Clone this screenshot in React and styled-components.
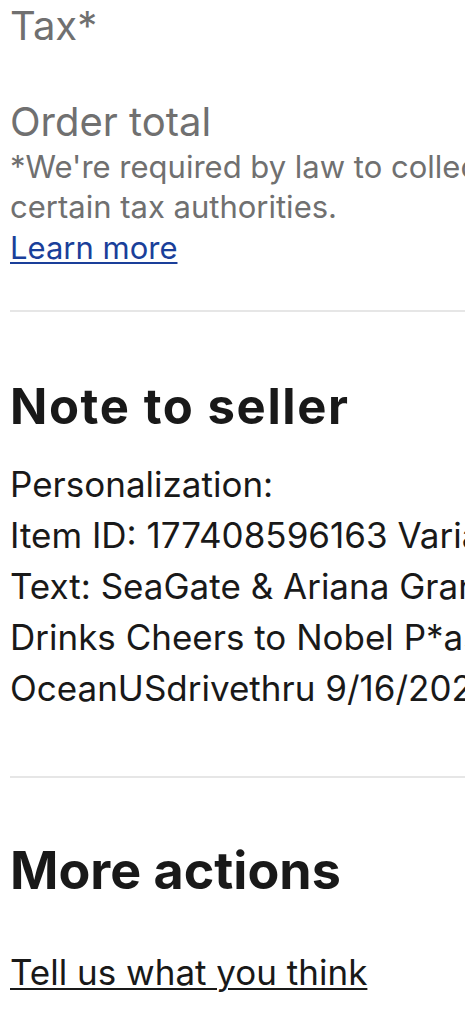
import React from 'react';
import styled, { createGlobalStyle } from 'styled-components';

const GlobalStyle = createGlobalStyle`
  html, body {
    margin: 0;
    padding: 0;
    background: #ffffff;
    overflow-x: hidden;
  }
  body {
    font-family: Inter, "Liberation Sans", sans-serif;
    color: #191919;
  }
`;

const Page = styled.div`
  width: 465px;
  overflow: hidden;
  padding-left: 10px;
  box-sizing: border-box;
`;

const Section = styled.section`
  padding: ${(p) => p.$pad || '0'};
`;

const SummaryRow = styled.div`
  font-size: 40px;
  line-height: 51px;
  color: #707070;
  white-space: nowrap;
  margin-top: ${(p) => p.$top || '0'};
`;

const Disclaimer = styled.p`
  margin: 0;
  font-size: 31px;
  line-height: 40px;
  color: #707070;
  white-space: nowrap;
`;

const BlueLink = styled.a`
  display: block;
  width: fit-content;
  font-size: 31px;
  line-height: 42px;
  color: #1a3f9a;
  text-decoration: underline;
  text-underline-offset: 3px;
  text-decoration-thickness: 2px;
`;

const Divider = styled.hr`
  margin: 0;
  border: none;
  height: 2px;
  background: #e6e6e6;
  width: 100%;
`;

const Heading = styled.h2`
  margin: 0;
  font-size: ${(p) => p.$size || '49px'};
  line-height: ${(p) => p.$lh || '56px'};
  letter-spacing: ${(p) => p.$ls || '0'};
  font-weight: 700;
  color: #191919;
  white-space: nowrap;
`;

const NoteText = styled.div`
  margin-top: 24px;
  font-size: 35px;
  line-height: 51px;
  color: #191919;
`;

const NoteLine = styled.div`
  white-space: nowrap;
`;

const PlainLink = styled.a`
  display: block;
  width: fit-content;
  margin-top: 49px;
  font-size: 35px;
  line-height: 44px;
  color: #191919;
  text-decoration: underline;
  text-underline-offset: 3px;
  text-decoration-thickness: 2px;
`;

const noteLines = [
  'Personalization:',
  'Item ID: 177408596163 Variation: Blue',
  'Text: SeaGate & Ariana Grande Iced',
  'Drinks Cheers to Nobel P*as Laureate',
  'OceanUSdrivethru 9/16/2024',
];

export default function App() {
  return (
    <>
      <GlobalStyle />
      <Page>
        <Section $pad="0 0 41px">
          <SummaryRow>Tax*</SummaryRow>
          <SummaryRow $top="45px">Order total</SummaryRow>
          <Disclaimer>
            *We're required by law to collect sales tax and applicable fees for
          </Disclaimer>
          <Disclaimer>certain tax authorities.</Disclaimer>
          <BlueLink href="#">Learn more</BlueLink>
        </Section>
        <Divider />
        <Section $pad="67px 0 62px">
          <Heading $ls="1.6px">Note to seller</Heading>
          <NoteText>
            {noteLines.map((line) => (
              <NoteLine key={line}>{line}</NoteLine>
            ))}
          </NoteText>
        </Section>
        <Divider />
        <Section $pad="63px 0 40px">
          <Heading $size="52px" $lh="60px">
            More actions
          </Heading>
          <PlainLink href="#">Tell us what you think</PlainLink>
        </Section>
      </Page>
    </>
  );
}
